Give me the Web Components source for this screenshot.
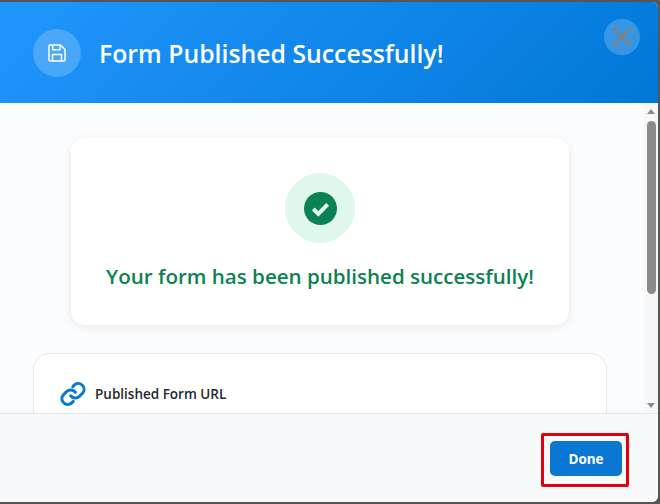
<!DOCTYPE html>
<html>
<head>
<meta charset="utf-8">
<style>
    html, body { margin: 0; height: 100%; }
    body { background: #555; overflow: hidden; font-family: "Open Sans", "Noto Sans", sans-serif; }
</style>
</head>
<body>
<publish-dialog>
    <dialog-header slot="header" title="Form Published Successfully!"></dialog-header>
    <success-card slot="body" message="Your form has been published successfully!"></success-card>
    <url-card slot="body" label="Published Form URL"></url-card>
    <fake-scrollbar slot="scroll"></fake-scrollbar>
    <dialog-footer slot="footer"></dialog-footer>
</publish-dialog>

<script>
class publishDialog extends HTMLElement {
    constructor() {
        super();
        this.shadow = this.attachShadow({ mode: "open" });
    }

    connectedCallback() {
        this.shadow.innerHTML = `
            <style>
                :host {
                    display: flex;
                    flex-direction: column;
                    box-sizing: border-box;
                    width: 658px;
                    height: 500px;
                    margin-top: 2px;
                    background: #f8f9fb;
                    border-radius: 0 6px 6px 0;
                    overflow: hidden;
                }
                .middle {
                    display: flex;
                    flex: 1;
                    min-height: 0;
                    background: #fbfcfe;
                }
                .content {
                    flex: 1;
                    min-width: 0;
                    overflow: hidden;
                }
            </style>
            <slot name="header"></slot>
            <div class="middle">
                <div class="content"><slot name="body"></slot></div>
                <slot name="scroll"></slot>
            </div>
            <slot name="footer"></slot>
        `;
    }
}

class dialogHeader extends HTMLElement {
    constructor() {
        super();
        this.shadow = this.attachShadow({ mode: "open" });
    }

    get title() {
        return this.getAttribute("title");
    }

    connectedCallback() {
        this.shadow.innerHTML = `
            <style>
                :host {
                    display: flex;
                    align-items: center;
                    gap: 18px;
                    position: relative;
                    box-sizing: border-box;
                    height: 101px;
                    flex: none;
                    padding: 0 0 0 33px;
                    background: linear-gradient(135deg, #2196fd 0%, #0078d8 100%);
                }
                .icon {
                    display: flex;
                    align-items: center;
                    justify-content: center;
                    width: 48px;
                    height: 48px;
                    border-radius: 50%;
                    background: rgba(255, 255, 255, 0.2);
                }
                h2 {
                    margin: 0;
                    font-size: 24.8px;
                    font-weight: 600;
                    color: #fff;
                }
                .close {
                    position: absolute;
                    left: 604px;
                    top: 17px;
                    width: 36px;
                    height: 36px;
                    border-radius: 50%;
                    background: rgba(255, 255, 255, 0.2);
                    display: flex;
                    align-items: center;
                    justify-content: center;
                }
            </style>
            <div class="icon">
                <svg width="20" height="20" viewBox="0 0 20 20" fill="none" stroke="#fff" stroke-width="1.5" stroke-linejoin="round">
                    <path d="M2 3.2c0-.7.5-1.2 1.2-1.2h10.3L18 6.5v10.3c0 .7-.5 1.2-1.2 1.2H3.200c-.7 0-1.200-.5-1.200-1.200z"/>
                    <path d="M5.700 2v4.800h7.300V2"/>
                    <path d="M5.500 18v-6.500h9V18"/>
                </svg>
            </div>
            <h2>${this.title}</h2>
            <div class="close">
                <svg width="22" height="22" viewBox="0 0 22 22" fill="none" stroke="#808080" stroke-width="3">
                    <path d="M2.500 2.500l17 17M19.500 2.500l-17 17"/>
                </svg>
            </div>
        `;
    }
}

class successCard extends HTMLElement {
    constructor() {
        super();
        this.shadow = this.attachShadow({ mode: "open" });
    }

    get message() {
        return this.getAttribute("message");
    }

    connectedCallback() {
        this.shadow.innerHTML = `
            <style>
                :host {
                    display: flex;
                    flex-direction: column;
                    align-items: center;
                    box-sizing: border-box;
                    width: 498px;
                    height: 187px;
                    margin: 35px 0 28px 71px;
                    padding-top: 35px;
                    background: #fff;
                    border-radius: 14px;
                    box-shadow: 0 2px 10px rgba(0, 0, 0, 0.08);
                }
                .ring {
                    display: flex;
                    align-items: center;
                    justify-content: center;
                    width: 70px;
                    height: 70px;
                    border-radius: 50%;
                    background: #e0f7ec;
                }
                p {
                    margin: 19px 0 0;
                    font-size: 20.55px;
                    font-weight: 600;
                    color: #0b8250;
                    white-space: nowrap;
                }
            </style>
            <div class="ring">
                <svg width="33" height="33" viewBox="0 0 33 33">
                    <circle cx="16.500" cy="16.500" r="16.500" fill="#0b8250"/>
                    <path d="M9.300 16.800l5 5 9.400-9.400" fill="none" stroke="#e6f7ee" stroke-width="4"/>
                </svg>
            </div>
            <p>${this.message}</p>
        `;
    }
}

class urlCard extends HTMLElement {
    constructor() {
        super();
        this.shadow = this.attachShadow({ mode: "open" });
    }

    get label() {
        return this.getAttribute("label");
    }

    connectedCallback() {
        this.shadow.innerHTML = `
            <style>
                :host {
                    display: flex;
                    align-items: center;
                    gap: 8px;
                    box-sizing: border-box;
                    width: 574px;
                    height: 120px;
                    margin-left: 33px;
                    padding: 0 0 39px 25px;
                    background: #fff;
                    border: 1px solid #e6e8ec;
                    border-radius: 16px;
                }
                span {
                    font-size: 13.500px;
                    font-weight: 600;
                    color: #25282c;
                }
            </style>
            <svg width="28" height="28" viewBox="0 0 24 24" fill="none" stroke="#0a78cf" stroke-width="2.600" stroke-linecap="round">
                <path d="M10 13.500a5 5 0 0 0 7.500.5l3-3a5 5 0 0 0-7-7l-1.700 1.700"/>
                <path d="M14 10.500a5 5 0 0 0-7.500-.5l-3 3a5 5 0 0 0 7 7l1.700-1.700"/>
            </svg>
            <span>${this.label}</span>
        `;
    }
}

class fakeScrollbar extends HTMLElement {
    constructor() {
        super();
        this.shadow = this.attachShadow({ mode: "open" });
    }

    connectedCallback() {
        this.shadow.innerHTML = `
            <style>
                :host {
                    display: flex;
                    flex-direction: column;
                    align-items: center;
                    box-sizing: border-box;
                    width: 14px;
                    flex: none;
                    padding-top: 6px;
                    background: #f6f7f9;
                }
                .arrow {
                    width: 0;
                    height: 0;
                    border-left: 4.500px solid transparent;
                    border-right: 4.500px solid transparent;
                }
                .up { border-bottom: 5px solid #8a8a8a; }
                .down { border-top: 5px solid #8a8a8a; margin-top: auto; margin-bottom: 5px; }
                .thumb {
                    width: 9px;
                    height: 173px;
                    margin-top: 7px;
                    border-radius: 5px;
                    background: #8a8a8a;
                }
            </style>
            <div class="arrow up"></div>
            <div class="thumb"></div>
            <div class="arrow down"></div>
        `;
    }
}

class dialogFooter extends HTMLElement {
    constructor() {
        super();
        this.shadow = this.attachShadow({ mode: "open" });
    }

    connectedCallback() {
        this.shadow.innerHTML = `
            <style>
                :host {
                    display: flex;
                    justify-content: flex-end;
                    align-items: flex-start;
                    box-sizing: border-box;
                    height: 89px;
                    flex: none;
                    padding: 19px 29px 0 0;
                    background: #f8f9fb;
                    border-top: 1px solid #e4e6ea;
                }
                .outline {
                    padding: 5px 4px 8px 6px;
                    border: 3px solid #e0000f;
                    border-radius: 2px;
                    line-height: 0;
                }
                button {
                    width: 72px;
                    height: 35px;
                    border: 0;
                    border-radius: 5px;
                    background: #0a78d2;
                    color: #fff;
                    font-family: inherit;
                    font-size: 13.500px;
                    font-weight: 700;
                }
            </style>
            <div class="outline"><button>Done</button></div>
        `;
    }
}

window.customElements.define("publish-dialog", publishDialog);
window.customElements.define("dialog-header", dialogHeader);
window.customElements.define("success-card", successCard);
window.customElements.define("url-card", urlCard);
window.customElements.define("fake-scrollbar", fakeScrollbar);
window.customElements.define("dialog-footer", dialogFooter);
</script>
</body>
</html>
